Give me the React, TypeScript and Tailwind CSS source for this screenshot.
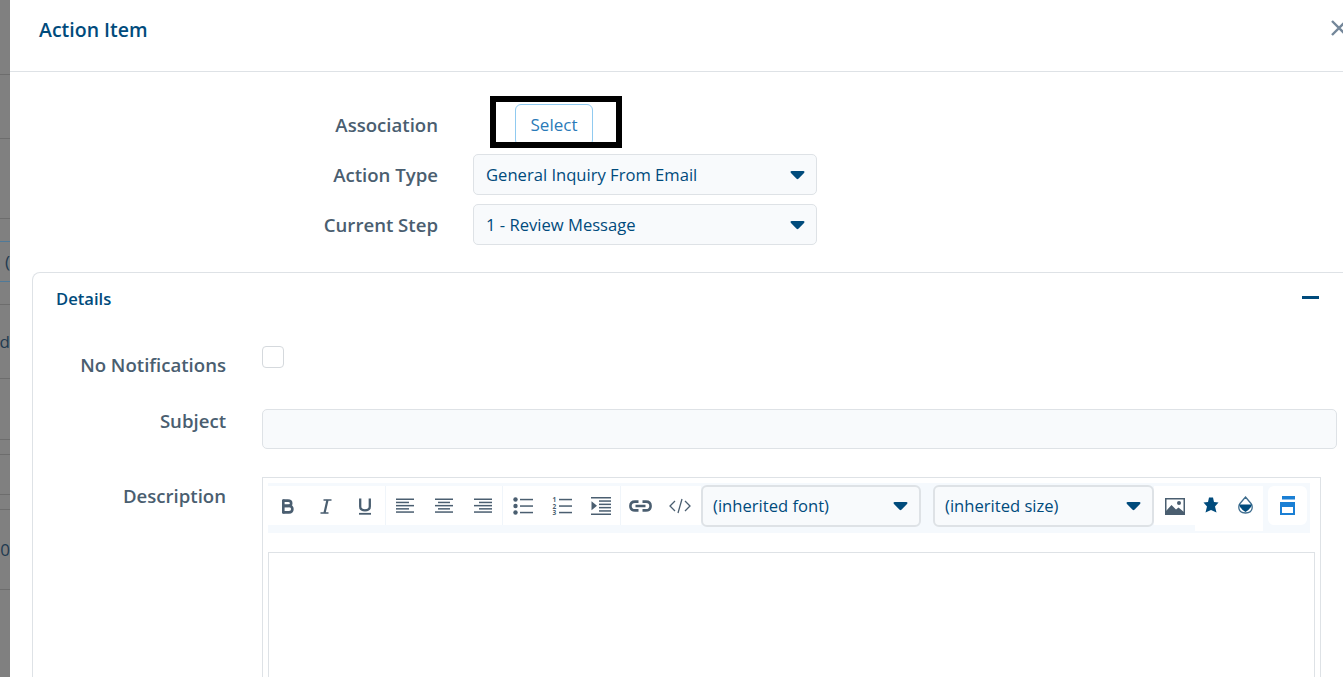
import React from 'react';

const font = "font-['Open_Sans','Noto_Sans',sans-serif]";

const stripRows = [
  { h: 'h-[75px]' },
  { h: 'h-[64px]' },
  { h: 'h-[80px]' },
  { h: 'h-[23px]', blue: true },
  { h: 'h-[40px]', blue: true, text: '(' },
  { h: 'h-[23px]' },
  { h: 'h-[74px]', text: 'd' },
  { h: 'h-[61px]' },
  { h: 'h-[15px]' },
  { h: 'h-[40px]' },
  { h: 'h-[15px]' },
  { h: 'h-[80px]', text: '0' },
];

const Caret = () => (
  <svg width="15" height="9" viewBox="0 0 15 9" className="shrink-0">
    <path d="M0.5 1 Q0.5 0 1.8 0 H13.2 Q14.5 0 14.5 1 Q14.5 1.6 13.8 2.2 L8.4 7.8 Q7.5 8.6 6.6 7.8 L1.2 2.2 Q0.5 1.6 0.5 1 Z" fill="#004b7c" />
  </svg>
);

const Lines = ({ rows }: { rows: number[][] }) => (
  <svg width="18" height="16" viewBox="0 0 18 16" fill="#4a5e70">
    {rows.map((r, i) => (
      <rect key={i} x={r[0]} y={0.5 + i * 3.2} width={r[1]} height="1.5" />
    ))}
  </svg>
);

const ToolBtn = ({ children, className = '' }: { children: React.ReactNode; className?: string }) => (
  <div className={`flex-1 h-[39px] pt-[1px] bg-white flex items-center justify-center ${className}`}>{children}</div>
);

const Select = ({ value, className = '' }: { value: string; className?: string }) => (
  <div className={`shrink-0 flex items-center justify-between bg-[#f8fafc] border border-[#dee2e6] rounded-[5px] text-[#004b7c] text-[16.6px] ${className}`}>
    <span>{value}</span>
    <Caret />
  </div>
);

const App: React.FC = () => {
  return (
    <div className={`w-[1343px] h-[677px] overflow-hidden flex bg-white ${font}`}>
      <div className="w-[10px] shrink-0 bg-[#808080] flex flex-col">
        {stripRows.map((r, i) => (
          <div
            key={i}
            className={`${r.h} shrink-0 border-b flex items-center justify-end overflow-hidden text-[17px] text-[#1f3a50] ${r.blue ? 'border-[#4f7a99]' : 'border-[#6d6d6d]'}`}
          >
            {r.text && <span className="whitespace-nowrap">{r.text}</span>}
          </div>
        ))}
      </div>

      <div className="flex-1 min-w-0 flex flex-col">
        <div className="h-[72px] shrink-0 border-b border-[#dee2e6] flex items-center justify-between pl-[29px] pb-[12px]">
          <h2 className="text-[19.5px] font-semibold text-[#004b7c]">Action Item</h2>
          <svg width="16" height="16" viewBox="0 0 16 16" className="-mr-[4px] mb-[4px]" stroke="#74879a" strokeWidth="2.4">
            <path d="M1 1 L15 15 M15 1 L1 15" />
          </svg>
        </div>

        <div className="flex flex-col pt-[28px]">
          <div className="flex items-center h-[50px]">
            <label className="w-[428px] text-right text-[18.6px] font-semibold text-[#4a5e70]">Association</label>
            <div className="ml-[77px] relative w-[78px] h-[42px] -mt-[1px] border border-[#90caf0] rounded-[6px] bg-white flex items-center justify-center text-[17px] text-[#2a7ab8]">
              Select
              <div className="absolute -left-[26px] -top-[9px] w-[132px] h-[52px] border-[6px] border-black" />
            </div>
          </div>
          <div className="flex items-center h-[50px]">
            <label className="w-[428px] text-right text-[18.6px] font-semibold text-[#4a5e70]">Action Type</label>
            <Select value="General Inquiry From Email" className="ml-[35px] -mt-[1px] w-[344px] h-[41px] pl-[12px] pr-[11px] pt-[1px]" />
          </div>
          <div className="flex items-center h-[50px]">
            <label className="w-[428px] text-right text-[18.6px] font-semibold text-[#4a5e70]">Current Step</label>
            <Select value="1 - Review Message" className="ml-[35px] -mt-[1px] w-[344px] h-[41px] pl-[12px] pr-[11px] pt-[1px]" />
          </div>
        </div>

        <div className="ml-[22px] mt-[22px] w-[1320px] shrink-0 flex-1 border border-[#dee2e6] border-b-0 rounded-t-[8px] flex flex-col">
          <div className="h-[52px] shrink-0 flex items-center justify-between pl-[23px] pr-[32px]">
            <h3 className="text-[16.6px] font-semibold text-[#004b7c]">Details</h3>
            <div className="w-[17px] h-[3px] bg-[#004b7c] -mt-[4px]" />
          </div>

          <div className="flex items-start h-[84px] shrink-0">
            <label className="w-[193px] pt-[26px] text-right text-[18.6px] font-semibold text-[#4a5e70]">No Notifications</label>
            <div className="ml-[36px] mt-[21px] w-[22px] h-[22px] border border-[#d5d9dd] rounded-[4px] bg-white" />
          </div>

          <div className="flex items-start h-[68px] shrink-0">
            <label className="w-[193px] -mt-[2px] text-right text-[18.6px] font-semibold text-[#4a5e70]">Subject</label>
            <div className="ml-[36px] w-[1075px] h-[40px] border border-[#dee2e6] rounded-[5px] bg-[#f8fafc]" />
          </div>

          <div className="flex items-start flex-1 min-h-0 overflow-hidden">
            <label className="w-[193px] text-right text-[18.6px] font-semibold text-[#4a5e70] pt-[5px]">Description</label>
            <div className="ml-[36px] w-[1059px] h-[300px] shrink-0 border border-[#dee2e6] p-[5px]">
              <div className="w-[1042px] h-[50px] bg-[#f5f9fd] flex items-start pt-[3px]">
                <div className="w-[433px] pr-[2px] shrink-0 flex bg-white">
                  <ToolBtn>
                    <svg width="13" height="15" viewBox="0 0 13 15" fill="none" stroke="#4a5e70" strokeWidth="2.6">
                      <path d="M2.3 0.5 V14.5" />
                      <path d="M2 1.6 H7 Q10.2 1.6 10.2 4.2 Q10.2 6.9 7 6.9 H2" />
                      <path d="M2 6.9 H8 Q11.4 6.9 11.4 10.1 Q11.4 13.4 8 13.4 H2" />
                    </svg>
                  </ToolBtn>
                  <ToolBtn>
                    <svg width="12" height="15" viewBox="0 0 12 15" fill="none" stroke="#4a5e70">
                      <path d="M3.5 1 H11.5 M0.5 14 H8.5" strokeWidth="1.5" />
                      <path d="M7.5 1 L4.5 14" strokeWidth="2.2" />
                    </svg>
                  </ToolBtn>
                  <ToolBtn className="border-r border-[#f0f5fa]">
                    <svg width="14" height="17" viewBox="0 0 14 17" fill="none" stroke="#4a5e70">
                      <path d="M2.2 0.5 V8.5 Q2.2 12.3 7 12.3 Q11.8 12.3 11.8 8.5 V0.5" strokeWidth="2.3" />
                      <path d="M1 15.8 H13" strokeWidth="1.8" />
                    </svg>
                  </ToolBtn>
                  <ToolBtn><Lines rows={[[0, 18], [0, 13], [0, 18], [0, 13], [0, 18]]} /></ToolBtn>
                  <ToolBtn><Lines rows={[[0, 18], [3, 12], [0, 18], [3, 12], [0, 18]]} /></ToolBtn>
                  <ToolBtn className="border-r border-[#f0f5fa]"><Lines rows={[[0, 18], [5, 13], [0, 18], [5, 13], [0, 18]]} /></ToolBtn>
                  <ToolBtn>
                    <svg width="20" height="18" viewBox="0 0 20 18" fill="#4a5e70">
                      <circle cx="2.5" cy="2.5" r="2.2" />
                      <circle cx="2.5" cy="9" r="2.2" />
                      <circle cx="2.5" cy="15.5" r="2.2" />
                      <rect x="7" y="1.8" width="13" height="1.5" />
                      <rect x="7" y="8.3" width="13" height="1.5" />
                      <rect x="7" y="14.8" width="13" height="1.5" />
                    </svg>
                  </ToolBtn>
                  <ToolBtn>
                    <svg width="20" height="20" viewBox="0 0 20 20" fill="#4a5e70">
                      <text x="0.5" y="6" fontSize="6.5" fontWeight="700" fontFamily="'Open Sans',sans-serif">1</text>
                      <text x="0.5" y="12.5" fontSize="6.5" fontWeight="700" fontFamily="'Open Sans',sans-serif">2</text>
                      <text x="0.5" y="19" fontSize="6.5" fontWeight="700" fontFamily="'Open Sans',sans-serif">3</text>
                      <rect x="7" y="2.8" width="13" height="1.5" />
                      <rect x="7" y="9.3" width="13" height="1.5" />
                      <rect x="7" y="15.8" width="13" height="1.5" />
                    </svg>
                  </ToolBtn>
                  <ToolBtn className="border-r border-[#f0f5fa]">
                    <svg width="20" height="18" viewBox="0 0 20 18" fill="#4a5e70">
                      <rect x="0" y="0" width="20" height="1.5" />
                      <rect x="8" y="3.3" width="12" height="1.5" />
                      <rect x="8" y="6.6" width="12" height="1.5" />
                      <rect x="8" y="9.9" width="12" height="1.5" />
                      <rect x="8" y="13.2" width="12" height="1.5" />
                      <rect x="0" y="16.5" width="20" height="1.5" />
                      <path d="M0.5 4.3 L6 8.8 L0.5 13.3 Z" />
                    </svg>
                  </ToolBtn>
                  <ToolBtn>
                    <svg width="23" height="12" viewBox="0 0 23 12" fill="none" stroke="#4a5e70" strokeWidth="2.6">
                      <path d="M9.5 1.6 H6 Q1.4 1.6 1.4 6 Q1.4 10.4 6 10.4 H9.5 M13.5 1.6 H17 Q21.6 1.6 21.6 6 Q21.6 10.4 17 10.4 H13.5 M6.5 6 H16.5" />
                    </svg>
                  </ToolBtn>
                  <ToolBtn>
                    <svg width="22" height="16" viewBox="0 0 22 16" fill="none" stroke="#4a5e70" strokeWidth="1.3">
                      <path d="M6 3 L1 8 L6 13 M16 3 L21 8 L16 13 M13 1 L9 15" />
                    </svg>
                  </ToolBtn>
                </div>
                <Select value="(inherited font)" className="w-[220px] h-[42px] pl-[10px] pr-[11px] pt-[1px] border-2 rounded-[6px] -mt-[1px]" />
                <Select value="(inherited size)" className="ml-[12px] w-[221px] h-[42px] pl-[10px] pr-[11px] pt-[1px] border-2 rounded-[6px] -mt-[1px]" />
                <div className="flex items-start shrink-0">
                  <div className="w-[41px] h-[39px] pt-[1px] bg-white flex items-center justify-center">
                    <svg width="20" height="17" viewBox="0 0 20 17" fill="#4a5e70">
                      <path d="M0 0 H20 V17 H0 Z M1.5 1.5 V15.5 H18.5 V1.5 Z" fillRule="evenodd" />
                      <circle cx="14" cy="5" r="2" />
                      <path d="M1 16 V13 L6.5 7 L11 11.5 L13.5 9.5 L19 14 V16 Z" />
                    </svg>
                  </div>
                  <div className="w-[34px] h-[45px] pr-[2px] bg-white flex items-start justify-center pt-[11px]">
                    <svg width="16" height="16" viewBox="0 0 16 16" fill="#004b7c">
                      <path d="M6 0.5 H10 L11 5 L15.5 5.5 L12 9.5 L13.5 15.5 L8 13 L2.5 15.5 L4 9.5 L0.5 5.5 L5 5 Z" />
                    </svg>
                  </div>
                  <div className="w-[34px] h-[45px] pr-[2px] bg-white flex items-start justify-center pt-[10px]">
                    <svg width="15" height="18" viewBox="0 0 15 18" fill="none">
                      <path d="M7.5 1 L13 7.5 Q14.2 9 14.2 11 Q14.2 17 7.5 17 Q0.8 17 0.8 11 Q0.8 9 2 7.5 Z" stroke="#3f6d8e" strokeWidth="1.3" />
                      <path d="M1.2 8.5 H13.8 Q13.8 12 7.5 16 Q1.2 12 1.2 8.5 Z" fill="#004b7c" />
                    </svg>
                  </div>
                  <div className="ml-[5px] w-[39px] h-[39px] bg-white rounded-[6px] flex items-center justify-center">
                    <svg width="15" height="19" viewBox="0 0 15 19" fill="#1a7fd4">
                      <rect x="2" y="0" width="13" height="3.5" />
                      <path d="M0 6 H15 V19 H0 Z M2 11 V17 H13 V11 Z" fillRule="evenodd" />
                    </svg>
                  </div>
                </div>
              </div>
              <div className="mt-[19px] w-[1047px] h-[200px] border border-[#dee2e6] bg-white" />
            </div>
          </div>
        </div>
      </div>
    </div>
  );
};

export default App;
